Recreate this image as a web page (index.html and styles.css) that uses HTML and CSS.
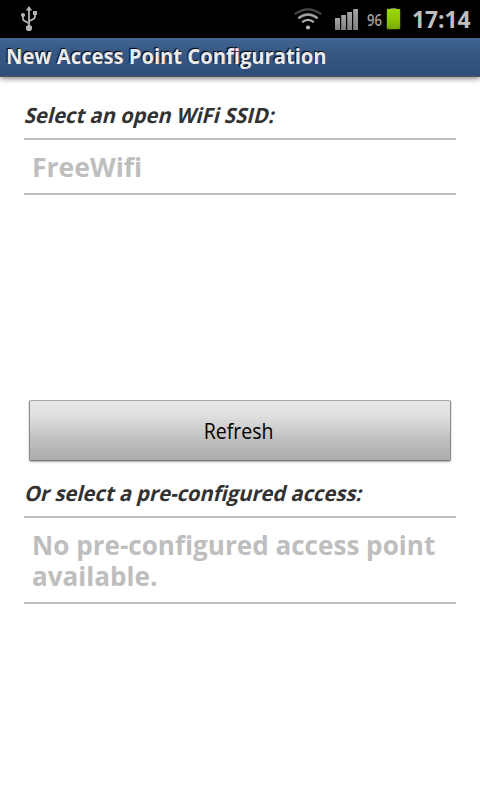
FILE: index.html
```html
<!DOCTYPE html>
<html lang="en">
<head>
    <meta charset="UTF-8">
    <meta name="viewport" content="width=device-width, initial-scale=1.0">
    <title>New Access Point Configuration</title>
    <link rel="stylesheet" href="styles.css">
</head>
<body>
    <div class="status-bar">
        <svg class="usb" width="18" height="26" viewBox="0 0 18 26">
            <g fill="none" stroke="#b4b4b4" stroke-width="1.8">
                <path d="M9 3v19"/>
                <path d="M3 9v3.5q0 2 2 2.7l4 2"/>
                <path d="M15 7v3.5q0 2-2 2.7l-4 2"/>
            </g>
            <g fill="#b4b4b4">
                <path d="M9 0l3.2 4.5H5.8z"/>
                <circle cx="3" cy="9" r="2.1"/>
                <path d="M13 5h4v4h-4z"/>
                <circle cx="9" cy="22" r="3.1"/>
            </g>
        </svg>
        <svg class="wifi" width="28" height="22" viewBox="0 0 28 22">
            <g fill="none" stroke-width="2.2">
                <path d="M.8 6.2Q14-3.6 27.2 6.2" stroke="#484848"/>
                <path d="M4.3 10.3q9.7-7.6 19.4 0" stroke="#a0a0a0"/>
                <path d="M8.2 14.1q5.8-4.5 11.6 0" stroke="#b0b0b0"/>
            </g>
            <circle cx="14" cy="19.5" r="2.1" fill="#b8b8b8"/>
        </svg>
        <svg class="signal" width="24" height="22" viewBox="0 0 24 22">
            <defs>
                <linearGradient id="bar" x1="0" y1="0" x2="0" y2="1">
                    <stop offset="0" stop-color="#a6a6a6"/>
                    <stop offset="1" stop-color="#808080"/>
                </linearGradient>
            </defs>
            <g fill="url(#bar)">
                <path d="M0 10h5v12H0z"/>
                <path d="M6.2 7h4.8v15H6.2z"/>
                <path d="M12.2 4H17v18h-4.8z"/>
                <path d="M18.2 1H23v21h-4.8z"/>
            </g>
        </svg>
        <span class="percent">96</span>
        <div class="battery"></div>
        <span class="clock">17:14</span>
    </div>

    <div class="title-bar">
        <h1>New Access Point Configuration</h1>
    </div>

    <div class="content">
        <h2>Select an open WiFi SSID:</h2>
        <div class="list open-list">
            <div class="item"><p class="wifi-name">FreeWifi</p></div>
        </div>

        <button class="refresh"><span>Refresh</span></button>

        <h2 class="second">Or select a pre-configured access:</h2>
        <div class="list">
            <div class="item"><p>No pre-configured access point available.</p></div>
        </div>
    </div>
</body>
</html>
```
FILE: styles.css
```css
* {
    box-sizing: border-box;
}

body {
    margin: 0;
    height: 100vh;
    overflow: hidden;
    background: #fff;
    font-family: "Open Sans", "Noto Sans", sans-serif;
}

h1, h2, p {
    margin: 0;
}

.status-bar {
    display: flex;
    align-items: flex-start;
    height: 38px;
    background: #000;
    color: #bebebe;
}

.usb {
    margin: 6px 0 0 20px;
}

.wifi {
    margin: 8px 0 0 256px;
}

.signal {
    margin: 8px 0 0 13px;
}

.percent {
    width: 20px;
    margin: 8px 0 0 8px;
    font-family: "Open Sans", sans-serif;
    font-size: 16px;
    font-weight: 600;
    line-height: 24px;
    color: #a0a0a0;
    transform: scaleX(0.82);
    transform-origin: left;
}

.battery {
    position: relative;
    width: 13px;
    height: 20px;
    margin-top: 9px;
    border-radius: 1px;
    background: linear-gradient(#9bd800, #8fc800 50%, #76a800);
    box-shadow: 0 0 2px #6d9a00;
}

.battery::before {
    content: '';
    position: absolute;
    top: -1px;
    left: 4px;
    width: 5px;
    height: 1px;
    background: #777;
}

.clock {
    margin: 4px 0 0 12px;
    font-size: 24px;
    font-weight: 700;
    line-height: 30px;
    transform: scaleX(0.95);
    transform-origin: left;
}

.title-bar {
    height: 39px;
    padding-left: 6px;
    background: linear-gradient(#416592, #365985 35%, #2f4e78);
    border-bottom: 1px solid #555;
    box-shadow: 0 1px 6px rgba(0, 0, 0, 0.6);
}

.title-bar h1 {
    font-size: 21px;
    line-height: 36px;
    color: #ebebeb;
    text-shadow: -1px -1px 1px #000;
    transform: scaleX(0.961);
    transform-origin: left;
}

.content {
    padding: 24px 24px 0;
}

.content h2 {
    font-size: 21px;
    line-height: 28px;
    color: #323232;
    transform: skewX(-14deg) scaleX(0.961);
    transform-origin: left 21px;
}

.list {
    margin-top: 9px;
}

.open-list {
    height: 253px;
}

.item {
    padding: 11px 0 11px 8px;
    border-top: 2px solid #bebebe;
    border-bottom: 2px solid #bebebe;
    font-size: 27px;
    font-weight: 700;
    line-height: 31px;
    color: #bebebe;
}

.item p {
    transform: scaleX(0.966);
    transform-origin: left;
}

.item .wifi-name {
    transform: scaleX(0.983);
}

.refresh {
    display: block;
    width: 422px;
    height: 61px;
    margin: 9px 0 0 5px;
    padding: 0;
    border: 1px solid #8a8a8a;
    border-top-color: #a8a8a8;
    border-bottom-color: #777;
    border-radius: 2px;
    background: linear-gradient(#e8e8e8, #dfdfdf 25%, #c0c0c0 65%, #acacac);
    box-shadow: 0 1px 2px rgba(0, 0, 0, 0.35);
    font-family: inherit;
    font-size: 21px;
    color: #000;
}

.refresh span {
    display: inline-block;
    transform: translateX(-1px) scaleX(0.93);
}

.content .second {
    margin-top: 18px;
}
```
